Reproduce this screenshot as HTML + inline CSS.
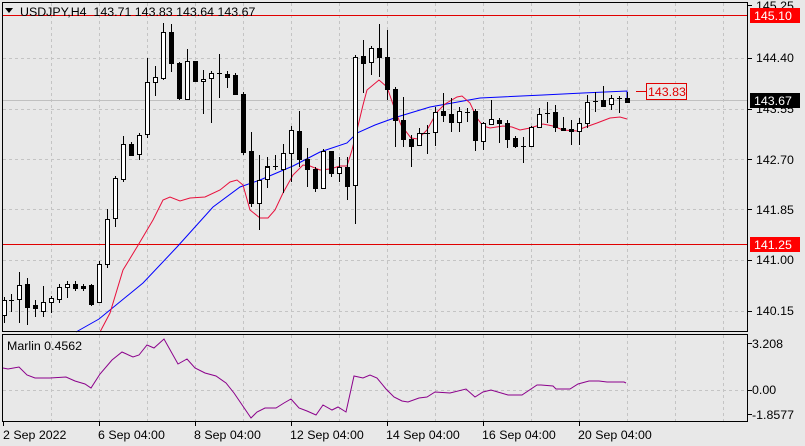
<!DOCTYPE html>
<html><head><meta charset="utf-8"><style>
html,body{margin:0;padding:0;background:#e8e8e8;}
svg{display:block;font-family:"Liberation Sans",sans-serif;font-size:12.4px;}
</style></head><body>
<svg width="805" height="446" viewBox="0 0 805 446" xmlns="http://www.w3.org/2000/svg">
<rect width="805" height="446" fill="#e8e8e8"/>
<g stroke="#c4c4c4" stroke-dasharray="3,3" stroke-width="1">
<path d="M51.5 3V331M99.5 3V331M147.5 3V331M195.5 3V331M243.5 3V331M291.5 3V331M339.5 3V331M387.5 3V331M435.5 3V331M483.5 3V331M531.5 3V331M579.5 3V331M627.5 3V331M675.5 3V331M723.5 3V331"/>
<path d="M3 58.5H747M3 109.5H747M3 159.5H747M3 209.5H747M3 260.5H747M3 311.5H747"/>
<path d="M51.5 335V421M99.5 335V421M147.5 335V421M195.5 335V421M243.5 335V421M291.5 335V421M339.5 335V421M387.5 335V421M435.5 335V421M483.5 335V421M531.5 335V421M579.5 335V421M627.5 335V421M675.5 335V421M723.5 335V421"/>
<path d="M3 390.5H747"/>
</g>
<line x1="3" y1="100.5" x2="747" y2="100.5" stroke="#c0c0c0"/>
<line x1="3" y1="15.5" x2="747" y2="15.5" stroke="#e00000"/>
<line x1="3" y1="244.5" x2="747" y2="244.5" stroke="#e00000"/>
<polyline fill="none" stroke="#0000ff" points="76,332 99,319 143,283 177,247 213,207 240,187 260,180 293,166 320,152 347,143 357,133 375,125 397,117 430,107 480,98 543,95 583,93 627,91 627,98"/>
<polyline fill="none" stroke="#e8103c" points="100,332 110,313 123,270 137,247 153,220 163,200 170,197 180,201 190,198 205,197 220,190 230,182 237,180 243,185 250,210 260,218 268,218 275,210 283,193 293,175 303,165 310,166 320,170 330,169 340,166 347,166 352,150 357,130 363,105 367,90 379,80 387,87 395,110 401,125 411,138 418,139 427,130 437,112 445,104 457,97 462,96 470,103 477,118 483,126 490,128 503,126 512,127 520,130 530,128 543,124 553,126 563,130 577,131 583,128 597,123 610,118 620,117 627,119"/>
<g stroke="#000" stroke-width="1" shape-rendering="crispEdges">
<path d="M4.5 297V323M11.5 294V312M19.5 272V323M27.5 278V325M35.5 300V317M43.5 286V317M51.5 296V313M59.5 284V303M67.5 281V298M75.5 281V291M83.5 284V291M91.5 284V306M99.5 261V302M107.5 209V268M115.5 176V227M123.5 136V182M131.5 142V156M139.5 133V160M147.5 58V138M155.5 66V96M163.5 23V80M171.5 24V72M179.5 62V100M187.5 49V100M195.5 61V81M203.5 70V114M211.5 71V123M219.5 54V98M227.5 71V88M235.5 73V94M243.5 92V155M251.5 132V207M259.5 155V230M267.5 157V188M275.5 155V170M283.5 144V193M291.5 126V182M299.5 111V167M307.5 148V187M315.5 167V192M323.5 149V189M331.5 151V177M339.5 157V182M347.5 157V200M355.5 55V224M363.5 40V93M371.5 46V75M379.5 24V77M387.5 30V100M395.5 87V147M403.5 97V147M411.5 135V167M419.5 128V146M427.5 125V154M435.5 107V146M443.5 93V122M451.5 98V132M459.5 107V132M467.5 108V122M475.5 109V151M483.5 122V150M491.5 100V125M499.5 118V143M507.5 120V148M515.5 136V148M523.5 137V163M531.5 126V147M539.5 108V128M547.5 102V123M555.5 105V132M563.5 117V131M571.5 120V145M579.5 118V145M587.5 95V128M595.5 92V112M603.5 86V107M611.5 95V110M619.5 96V113M627.5 92V103"/>
<g fill="#fff">
<rect x="2.5" y="300.5" width="4" height="15"/><rect x="17.5" y="285.5" width="4" height="14"/><rect x="41.5" y="302.5" width="4" height="9"/><rect x="49.5" y="298.5" width="4" height="4"/><rect x="57.5" y="287.5" width="4" height="12"/><rect x="65.5" y="284.5" width="4" height="3"/>
<rect x="97.5" y="264.5" width="4" height="38"/><rect x="105.5" y="219.5" width="4" height="45"/><rect x="113.5" y="178.5" width="4" height="40"/><rect x="121.5" y="144.5" width="4" height="35"/><rect x="137.5" y="135.5" width="4" height="19"/><rect x="145.5" y="82.5" width="4" height="52"/><rect x="153.5" y="77.5" width="4" height="5"/><rect x="161.5" y="32.5" width="4" height="46"/><rect x="185.5" y="61.5" width="4" height="38"/><rect x="201.5" y="79.5" width="4" height="2"/><rect x="209.5" y="73.5" width="4" height="5"/>
<rect x="257.5" y="180.5" width="4" height="23"/><rect x="265.5" y="167.5" width="4" height="12"/><rect x="281.5" y="153.5" width="4" height="16"/><rect x="289.5" y="130.5" width="4" height="23"/><rect x="321.5" y="151.5" width="4" height="37"/><rect x="337.5" y="167.5" width="4" height="6"/><rect x="353.5" y="57.5" width="4" height="128"/><rect x="369.5" y="48.5" width="4" height="14"/>
<rect x="417.5" y="133.5" width="4" height="12"/><rect x="433.5" y="112.5" width="4" height="20"/><rect x="457.5" y="111.5" width="4" height="11"/><rect x="481.5" y="123.5" width="4" height="18"/><rect x="489.5" y="119.5" width="4" height="5"/><rect x="529.5" y="127.5" width="4" height="19"/><rect x="537.5" y="114.5" width="4" height="13"/><rect x="577.5" y="123.5" width="4" height="8"/><rect x="585.5" y="102.5" width="4" height="21"/><rect x="609.5" y="98.5" width="4" height="6"/>
</g>
<g fill="#000">
<rect x="25.5" y="284.5" width="4" height="23"/><rect x="33.5" y="305.5" width="4" height="3"/><rect x="73.5" y="284.5" width="4" height="4"/><rect x="81.5" y="286.5" width="4" height="2"/><rect x="89.5" y="285.5" width="4" height="19"/>
<rect x="129.5" y="144.5" width="4" height="11"/><rect x="169.5" y="32.5" width="4" height="31"/><rect x="177.5" y="63.5" width="4" height="35"/><rect x="193.5" y="61.5" width="4" height="20"/><rect x="225.5" y="74.5" width="4" height="3"/><rect x="233.5" y="75.5" width="4" height="19"/><rect x="241.5" y="94.5" width="4" height="58"/><rect x="249.5" y="151.5" width="4" height="52"/>
<rect x="297.5" y="131.5" width="4" height="28"/><rect x="305.5" y="159.5" width="4" height="10"/><rect x="313.5" y="169.5" width="4" height="19"/><rect x="329.5" y="151.5" width="4" height="22"/><rect x="345.5" y="167.5" width="4" height="19"/><rect x="361.5" y="56.5" width="4" height="7"/><rect x="377.5" y="48.5" width="4" height="9"/><rect x="385.5" y="57.5" width="4" height="32"/><rect x="393.5" y="89.5" width="4" height="31"/><rect x="401.5" y="120.5" width="4" height="19"/><rect x="409.5" y="139.5" width="4" height="7"/>
<rect x="441.5" y="111.5" width="4" height="4"/><rect x="449.5" y="114.5" width="4" height="8"/><rect x="473.5" y="111.5" width="4" height="29"/><rect x="497.5" y="120.5" width="4" height="3"/><rect x="505.5" y="123.5" width="4" height="16"/><rect x="513.5" y="138.5" width="4" height="8"/><rect x="553.5" y="112.5" width="4" height="15"/><rect x="561.5" y="128.5" width="4" height="2"/><rect x="569.5" y="129.5" width="4" height="2"/><rect x="601.5" y="100.5" width="4" height="6"/><rect x="625.5" y="98.5" width="4" height="4"/>
</g>
<path d="M9 300.5H14M217 73.5H222M265 166.5H270M273 166.5H278M421 133.5H426M425 133.5H430M465 112.5H470M521 146.5H526M545 113.5H550M593 101.5H598M617 98.5H622"/>
</g>
<line x1="636" y1="91.5" x2="646" y2="91.5" stroke="#e00000"/>
<rect x="646.5" y="83.5" width="40" height="16" fill="#e8e8e8" stroke="#e00000"/>
<text x="648" y="96" fill="#e00000">143.83</text>
<rect x="2.5" y="2.5" width="745" height="329" fill="none" stroke="#000"/>
<rect x="2.5" y="334.5" width="745" height="87" fill="none" stroke="#000"/>
<path d="M5 8H13L9 13Z" fill="#000"/>
<text x="20" y="16" fill="#000" xml:space="preserve" style="white-space:pre">USDJPY,H4  143.71 143.83 143.64 143.67</text>
<g stroke="#000"><path d="M748 5.5H752M748 58.5H752M748 109.5H752M748 159.5H752M748 209.5H752M748 260.5H752M748 311.5H752M748 343.5H752M748 390.5H752M748 414.5H752"/></g>
<g fill="#000">
<text x="756" y="10">145.25</text>
<text x="756" y="62">144.40</text>
<text x="756" y="113">143.55</text>
<text x="756" y="164">142.70</text>
<text x="756" y="214">141.85</text>
<text x="756" y="264">141.00</text>
<text x="756" y="315">140.15</text>
<text x="752" y="348">3.208</text>
<text x="752" y="394">0.00</text>
<text x="752" y="419">-1.8577</text>
</g>
<rect x="750" y="8" width="50" height="15" fill="#ff0000"/>
<text x="754" y="20" fill="#fff">145.10</text>
<rect x="750" y="93" width="50" height="15" fill="#000"/>
<text x="754" y="105" fill="#fff">143.67</text>
<rect x="750" y="237" width="50" height="15" fill="#ff0000"/>
<text x="754" y="249" fill="#fff">141.25</text>
<text x="7" y="350" fill="#000">Marlin 0.4562</text>
<polyline fill="none" stroke="#8b008b" points="3,368 8,369 19,367 27,375 35,378 50,378 66,377 75,381 85,384 91,388 100,374 112,360 122,352 133,357 139,355 147,345 154,348 164,339 178,364 187,359 195,368 205,373 216,376 226,383 234,393 251,418 257,412 265,408 276,408 284,403 291,399 299,408 307,411 316,415 323,405 332,410 338,407 346,412 354,376 363,378 370,375 377,378 386,389 394,397 402,401 408,402 419,398 427,397 435,392 450,393 466,389 475,397 483,392 491,390 508,395 522,395 537,385 541,385 553,386 556,389 570,389 578,384 589,381 599,381 607,382 624,382 626,383"/>
<g stroke="#000"><path d="M3.5 422V426M99.5 422V426M195.5 422V426M291.5 422V426M387.5 422V426M483.5 422V426M579.5 422V426"/></g>
<g fill="#000">
<text x="3" y="439">2 Sep 2022</text>
<text x="98" y="439">6 Sep 04:00</text>
<text x="194" y="439">8 Sep 04:00</text>
<text x="290" y="439">12 Sep 04:00</text>
<text x="386" y="439">14 Sep 04:00</text>
<text x="482" y="439">16 Sep 04:00</text>
<text x="578" y="439">20 Sep 04:00</text>
</g>
</svg>
</body></html>
